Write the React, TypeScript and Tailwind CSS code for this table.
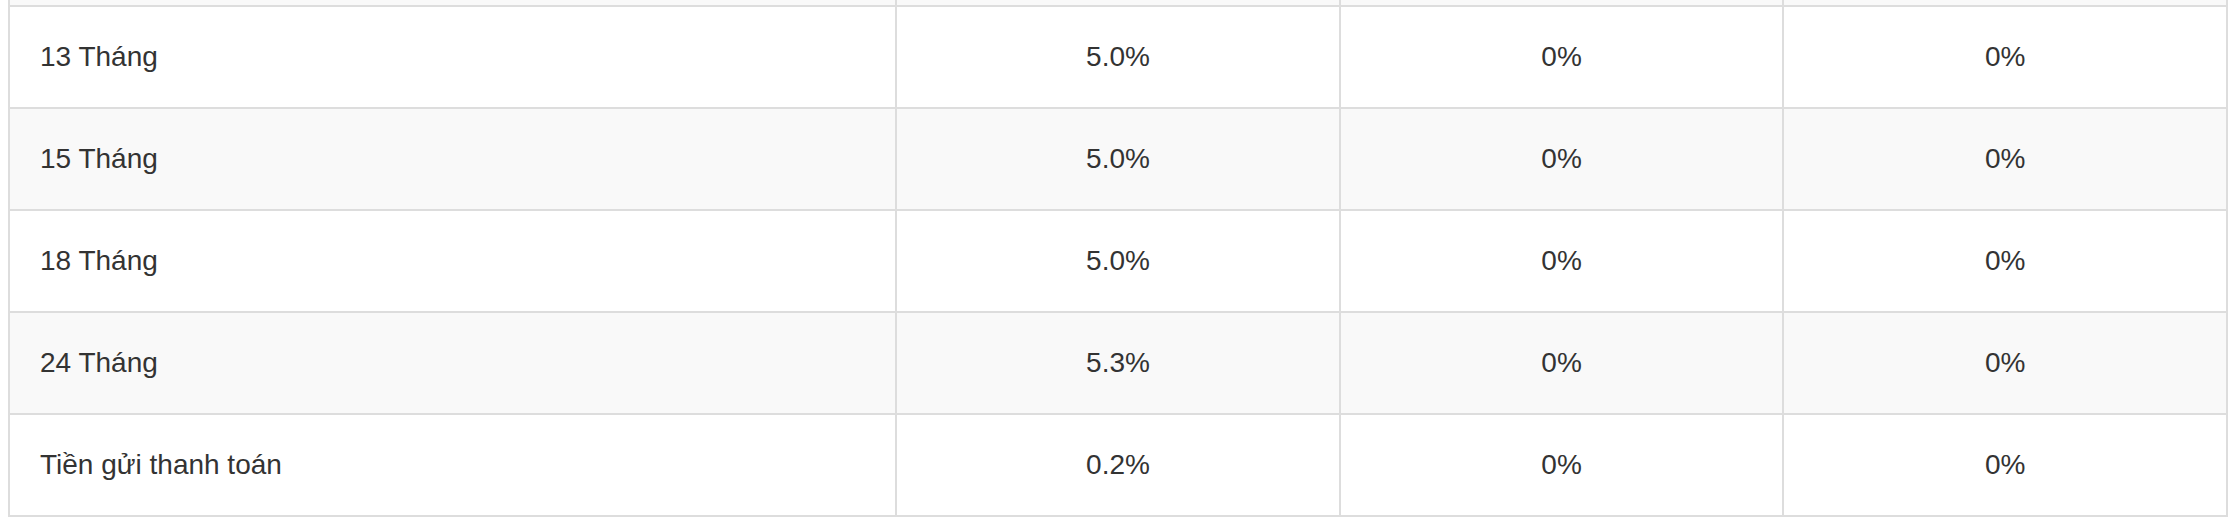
import React from 'react'

type RateRow = {
  term: string
  rate: string
  a: string
  b: string
}

const rows: RateRow[] = [
  { term: '13 Tháng', rate: '5.0%', a: '0%', b: '0%' },
  { term: '15 Tháng', rate: '5.0%', a: '0%', b: '0%' },
  { term: '18 Tháng', rate: '5.0%', a: '0%', b: '0%' },
  { term: '24 Tháng', rate: '5.3%', a: '0%', b: '0%' },
  { term: 'Tiền gửi thanh toán', rate: '0.2%', a: '0%', b: '0%' },
]

const cell = 'border-2 border-[#dddddd] px-[30px] py-[30px] leading-[40px]'

export default function App() {
  return (
    <div className="min-h-screen bg-white px-2 font-['Liberation_Sans',Arial,sans-serif] text-[28px] text-[#333333]">
      <table className="w-full table-fixed border-collapse">
        <colgroup>
          <col className="w-[40%]" />
          <col className="w-[20%]" />
          <col className="w-[20%]" />
          <col className="w-[20%]" />
        </colgroup>
        <tbody>
          {/* tail of the previous (striped) row, cut off at the top */}
          <tr className="h-[6px] bg-[#f9f9f9]">
            <td className="border-2 border-t-0 border-[#dddddd] p-0" />
            <td className="border-2 border-t-0 border-[#dddddd] p-0" />
            <td className="border-2 border-t-0 border-[#dddddd] p-0" />
            <td className="border-2 border-t-0 border-[#dddddd] p-0" />
          </tr>
          {rows.map((r, i) => (
            <tr key={r.term} className={i % 2 === 1 ? 'bg-[#f9f9f9]' : 'bg-white'}>
              <td className={`${cell} text-left`}>{r.term}</td>
              <td className={`${cell} text-center`}>{r.rate}</td>
              <td className={`${cell} text-center`}>{r.a}</td>
              <td className={`${cell} text-center`}>{r.b}</td>
            </tr>
          ))}
        </tbody>
      </table>
    </div>
  )
}
